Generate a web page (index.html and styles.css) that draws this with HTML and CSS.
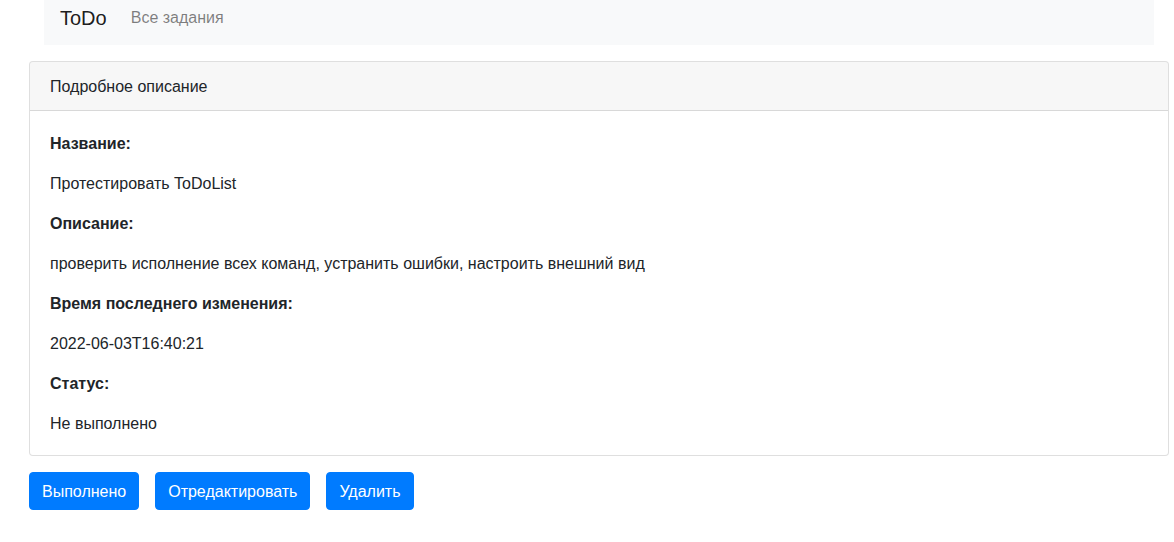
FILE: index.html
```html
<!DOCTYPE html>
<html lang="ru">
<head>
<meta charset="utf-8">
<title>ToDo</title>
<link rel="stylesheet" href="styles.css">
</head>
<body>
<nav class="navbar">
  <a class="brand" href="#">ToDo</a>
  <a class="nav-link" href="#">Все задания</a>
</nav>
<div class="card">
  <div class="card-header">Подробное описание</div>
  <div class="card-body">
    <p><b>Название:</b></p>
    <p>Протестировать ToDoList</p>
    <p><b>Описание:</b></p>
    <p>проверить исполнение всех команд, устранить ошибки, настроить внешний вид</p>
    <p><b>Время последнего изменения:</b></p>
    <p>2022-06-03T16:40:21</p>
    <p><b>Статус:</b></p>
    <p class="last">Не выполнено</p>
  </div>
</div>
<div class="actions">
  <button class="btn">Выполнено</button>
  <button class="btn">Отредактировать</button>
  <button class="btn">Удалить</button>
</div>
</body>
</html>
```
FILE: styles.css
```css
* { box-sizing: border-box; }
html, body { margin: 0; padding: 0; }
body {
  font-family: "Liberation Sans", Arial, sans-serif;
  font-size: 16px;
  line-height: 1.5;
  color: #212529;
  background: #fff;
  padding: 0 5px 0 29px;
}
.navbar {
  display: flex;
  align-items: center;
  margin: -11px 15px 16px 15px;
  padding: 8px 16px;
  background: #f8f9fa;
  height: 56px;
}
.brand {
  font-size: 20px;
  line-height: 30px;
  padding: 6px 0 4px;
  margin-right: 16px;
  color: rgba(0,0,0,.9);
  text-decoration: none;
}
.nav-link {
  padding: 9px 8px 7px;
  color: rgba(0,0,0,.5);
  text-decoration: none;
}
.card {
  border: 1px solid rgba(0,0,0,.125);
  border-radius: 4px;
  background: #fff;
  overflow: hidden;
}
.card-header {
  padding: 13px 20px 11px;
  background: rgba(0,0,0,.03);
  border-bottom: 1px solid rgba(0,0,0,.125);
}
.card-body {
  padding: 21px 20px 19px;
}
.card-body p { margin: 0 0 16px; }
.card-body p.last { margin-bottom: 0; }
.card-body b { font-weight: 700; }
.actions {
  display: flex;
  gap: 16px;
  margin-top: 16px;
}
.btn {
  font-family: inherit;
  font-size: 16px;
  line-height: 24px;
  padding: 7px 12px 5px;
  color: #fff;
  background: #007bff;
  border: 1px solid #007bff;
  border-radius: 4px;
  cursor: pointer;
}
```
